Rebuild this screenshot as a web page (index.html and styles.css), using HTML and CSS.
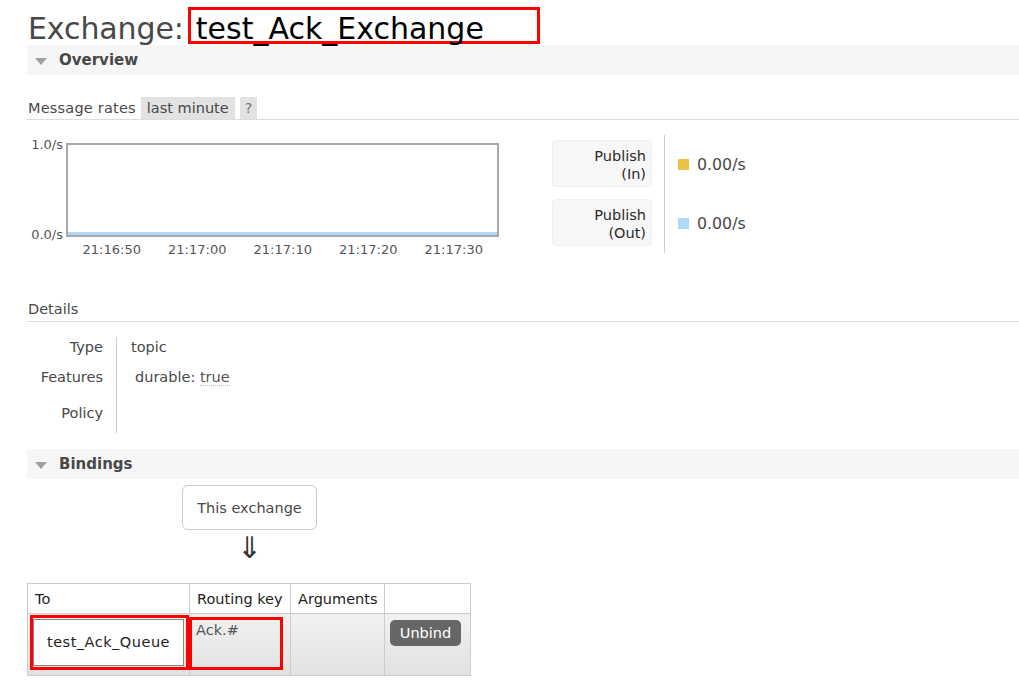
FILE: index.html
```html
<!DOCTYPE html>
<html>
<head>
<meta charset="utf-8">
<link rel="stylesheet" href="styles.css">
</head>
<body>
<div class="page">
  <h1 class="title"><span class="title-label">Exchange:</span><span class="title-name">test_Ack_Exchange</span></h1>

  <section class="section">
    <h2 class="section-head"><span class="tri"></span>Overview</h2>
    <div class="rates-head">
      <span class="rates-label">Message rates</span>
      <span class="chip">last minute</span>
      <span class="chip chip-help">?</span>
    </div>
    <div class="rates">
      <div class="chart">
        <div class="chart-main">
          <div class="yaxis"><span class="ylab ylab-top">1.0/s</span><span class="ylab ylab-bottom">0.0/s</span></div>
          <div class="plot"><div class="series"></div></div>
        </div>
        <div class="xaxis">
          <span>21:16:50</span><span>21:17:00</span><span>21:17:10</span><span>21:17:20</span><span>21:17:30</span>
        </div>
      </div>
      <div class="legend">
        <div class="legend-labels">
          <div class="legend-box">Publish<br>(In)</div>
          <div class="legend-box">Publish<br>(Out)</div>
        </div>
        <div class="legend-values">
          <div class="legend-value"><span class="swatch swatch-in"></span>0.00/s</div>
          <div class="legend-value"><span class="swatch swatch-out"></span>0.00/s</div>
        </div>
      </div>
    </div>

    <h3 class="sub-head">Details</h3>
    <div class="facts">
      <div class="fact-label row-type">Type</div><div class="fact-value row-type">topic</div>
      <div class="fact-label row-feat">Features</div><div class="fact-value row-feat indent">durable: <abbr class="flag">true</abbr></div>
      <div class="fact-label row-policy">Policy</div><div class="fact-value row-policy"></div>
    </div>
  </section>

  <section class="section">
    <h2 class="section-head bindings-head"><span class="tri"></span>Bindings</h2>
    <div class="flow">
      <div class="this-exchange">This exchange</div>
      <div class="arrow">&#8659;</div>
    </div>
    <table class="bindings">
      <colgroup><col class="c-to"><col class="c-key"><col class="c-args"><col class="c-act"></colgroup>
      <thead>
        <tr><th>To</th><th>Routing key</th><th>Arguments</th><th></th></tr>
      </thead>
      <tbody>
        <tr>
          <td class="cell-to"><div class="mark mark-to"><div class="queue-box">test_Ack_Queue</div></div></td>
          <td class="cell-key"><div class="mark mark-key">Ack.#</div></td>
          <td></td>
          <td class="cell-act"><button class="unbind">Unbind</button></td>
        </tr>
      </tbody>
    </table>
  </section>
</div>
</body>
</html>
```

FILE: styles.css
```css
html, body {
  margin: 0;
  padding: 0;
  background: #fff;
}
body {
  font-family: "DejaVu Sans", Verdana, sans-serif;
  font-size: 14.5px;
  line-height: 18px;
  color: #484848;
}
.page {
  padding-left: 27px;
  width: 992px;
}

/* title */
.title {
  display: flex;
  align-items: baseline;
  margin: 0;
  padding-top: 7px;
  height: 38px;
  font-size: 30px;
  font-weight: normal;
  line-height: 30px;
}
.title-label {
  color: #484848;
  margin-left: 1px;
  letter-spacing: -0.1px;
}
.title-name {
  box-sizing: border-box;
  margin-left: 4px;
  width: 352px;
  height: 37px;
  border: 3px solid #ff0000;
  padding: 4px 0 0 5px;
  color: #000;
}

/* section headers */
.section-head {
  display: flex;
  align-items: center;
  margin: 0;
  height: 30px;
  background: #f6f6f6;
  font-size: 15px;
  font-weight: bold;
  color: #484848;
}
.tri {
  width: 0;
  height: 0;
  margin: 2px 12px 0 8px;
  border-left: 6px solid transparent;
  border-right: 6px solid transparent;
  border-top: 7px solid #a0a0a0;
}

/* message rates */
.rates-head {
  display: flex;
  align-items: center;
  margin-top: 22px;
  height: 22px;
  border-bottom: 1px solid #dddddd;
}
.rates-label {
  margin-left: 1px;
  margin-right: 5px;
  letter-spacing: 0.2px;
}
.chip {
  height: 22px;
  line-height: 23px;
  padding: 0 6px;
  background: #e2e2e2;
  margin-right: 5px;
}
.chip-help {
  padding: 0 5px;
  color: #777;
}
.rates {
  display: flex;
  align-items: flex-start;
  margin-top: 15px;
}
.chart {
  margin-top: 8px;
  width: 473px;
  font-size: 13px;
  color: #555;
}
.chart-main {
  display: flex;
}
.yaxis {
  display: flex;
  flex-direction: column;
  justify-content: space-between;
  width: 36px;
  padding-right: 3px;
  text-align: right;
}
.ylab-top { margin-top: -7px; }
.ylab-bottom { margin-bottom: -7px; }
.plot {
  box-sizing: border-box;
  display: flex;
  align-items: flex-end;
  width: 433px;
  height: 94px;
  border: 2px solid #a8a8a8;
}
.series {
  width: 100%;
  height: 3px;
  background: #afd8f8;
}
.xaxis {
  display: flex;
  margin-top: 4px;
  margin-left: 42px;
}
.xaxis span {
  width: 85.5px;
  text-align: center;
}

/* legend */
.legend {
  display: flex;
  margin-left: 52px;
}
.legend-labels {
  display: flex;
  flex-direction: column;
  gap: 12px;
  padding: 5px 12px 7px 0;
  border-right: 1px solid #cccccc;
}
.legend-box {
  box-sizing: border-box;
  width: 100px;
  height: 47px;
  padding: 6px 5px 0 0;
  text-align: right;
  background: #f7f7f7;
  border: 1px solid #efefef;
  border-radius: 4px;
  color: #2b2b2b;
}
.legend-values {
  display: flex;
  flex-direction: column;
  gap: 12px;
  padding: 5px 0 7px 13px;
  font-size: 15.8px;
}
.legend-value {
  display: flex;
  align-items: center;
  height: 47px;
  padding-top: 2px;
  box-sizing: border-box;
}
.swatch {
  width: 11px;
  height: 11px;
  margin-right: 8px;
}
.swatch-in { background: #edc240; }
.swatch-out { background: #afd8f8; }

/* details */
.sub-head {
  margin: 41px 0 0 0;
  padding: 0 0 3px 1px;
  font-size: 14.5px;
  font-weight: normal;
  border-bottom: 1px solid #dddddd;
}
.facts {
  display: grid;
  grid-template-columns: 90px 1fr;
  grid-template-rows: 24px 30px 42px;
  margin-top: 15px;
}
.fact-label {
  box-sizing: border-box;
  text-align: right;
  padding-right: 13px;
  border-right: 1px solid #cccccc;
}
.fact-value {
  padding-left: 14px;
}
.row-type { padding-top: 1px; }
.row-feat { padding-top: 7px; }
.row-policy { padding-top: 13px; }
.indent { padding-left: 18px; }
.flag {
  text-decoration: none;
  border-bottom: 1px dotted #bbbbbb;
  color: #555;
}

/* bindings */
.bindings-head {
  margin-top: 16px;
}
.flow {
  display: flex;
  flex-direction: column;
  align-items: center;
  width: 135px;
  margin: 6px 0 0 155px;
}
.this-exchange {
  box-sizing: border-box;
  width: 135px;
  height: 45px;
  line-height: 44px;
  text-align: center;
  border: 1px solid #cccccc;
  border-radius: 6px;
}
.arrow {
  margin-top: 3px;
  height: 30px;
  line-height: 30px;
  font-size: 30px;
  color: #333;
}
.bindings {
  margin-top: 20px;
  border-collapse: collapse;
  table-layout: fixed;
  width: 444px;
}
.c-to { width: 162px; }
.c-key { width: 101px; }
.c-args { width: 94px; }
.c-act { width: 86px; }
.bindings th {
  height: 29px;
  padding: 0 6px 0 7px;
  text-align: left;
  font-weight: normal;
  color: #222;
  background: #fff;
  border: 1px solid #cccccc;
  white-space: nowrap;
}
.bindings td {
  height: 61px;
  padding: 0;
  vertical-align: top;
  border: 1px solid #cccccc;
  background: linear-gradient(#f1f1f1, #e1e1e1);
}
.mark {
  box-sizing: border-box;
  border: 3px solid #ff0000;
  position: relative;
  z-index: 1;
}
.mark-to {
  width: 159px;
  height: 55px;
  margin: 1px 0 0 2px;
}
.queue-box {
  box-sizing: border-box;
  width: 151px;
  height: 47px;
  margin-top: 1px;
  line-height: 45px;
  text-align: center;
  background: #fff;
  border: 1px solid #888888;
  color: #222;
  letter-spacing: 0.5px;
}
.mark-key {
  width: 94px;
  height: 53px;
  margin: 3px 0 0 -1px;
  padding: 1px 0 0 4px;
  color: #555;
}
.unbind {
  display: block;
  margin: 6px 0 0 5px;
  width: 71px;
  height: 26px;
  padding: 0;
  border: none;
  border-radius: 5px;
  background: #666666;
  color: #fff;
  font-family: "DejaVu Sans", Verdana, sans-serif;
  font-size: 14.5px;
}
```
